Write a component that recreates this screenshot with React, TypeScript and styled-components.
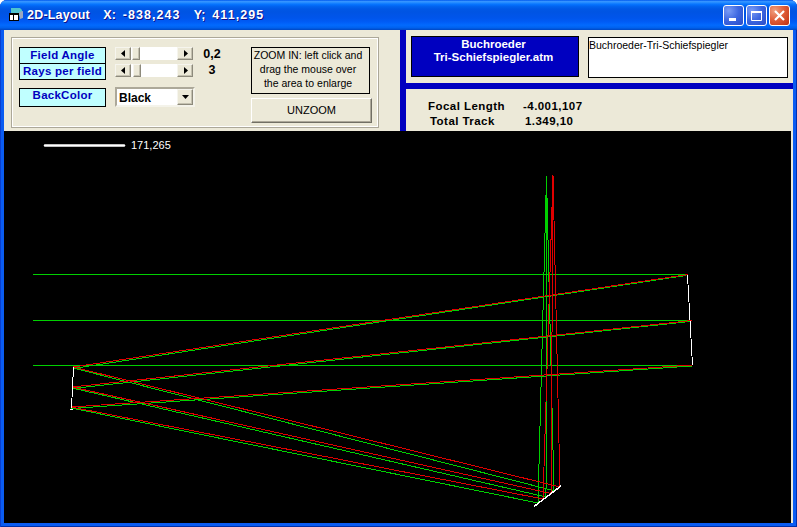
import React from "react";
import styled, { createGlobalStyle } from "styled-components";

const Global = createGlobalStyle`
  html, body { margin: 0; padding: 0; background: #fff; }
  body { font-family: "Liberation Sans", Arial, sans-serif; }
`;

const Win = styled.div`
  width: 797px;
  height: 527px;
  display: flex;
  flex-direction: column;
  background: #0a5cf2;
  box-shadow: inset 1px 0 #0a3fd0, inset -1px 0 #0030b0, inset 0 -1px #0030a8;
  border-radius: 7px 7px 0 0;
  overflow: hidden;
`;

const TitleBar = styled.div`
  height: 30px;
  flex: none;
  display: flex;
  align-items: center;
  padding: 0 7px 0 8px;
  background: linear-gradient(180deg, #0058ee 0%, #3593ff 5%, #288eff 8%, #127dff 12%, #036ffc 16%, #0262ee 22%, #0057e5 30%, #0054e3 40%, #0055eb 60%, #005bf5 72%, #026afe 84%, #0062ef 92%, #0052d6 97%, #0046c0 100%);
`;

const TitleText = styled.span`
  margin-left: 3px;
  color: #fff;
  font: bold 12.5px "Liberation Sans", sans-serif;
  letter-spacing: 0.2px;
  word-spacing: 3px;
  white-space: pre;
  text-shadow: 1px 1px 0 #0f1089;
  flex: 1;
`;

const TitleNumber = styled.span`
  letter-spacing: 1.05px;
`;

const WinBtnRow = styled.div`
  display: flex;
  gap: 2px;
  margin-top: 1px;
`;

const WinBtn = styled.div<{ $close?: boolean }>`
  width: 21px;
  height: 21px;
  box-sizing: border-box;
  border: 1px solid #fff;
  border-radius: 3px;
  display: flex;
  align-items: center;
  justify-content: center;
  background: ${(p) =>
    p.$close
      ? "radial-gradient(circle at 25% 25%, #f0a080 0%, #e0603c 45%, #c03010 100%)"
      : "radial-gradient(circle at 25% 25%, #7a9cf5 0%, #3c66e0 50%, #2a4cc8 100%)"};
`;

const Body = styled.div`
  flex: 1;
  min-height: 0;
  margin: 0 4px 4px;
  background: #ece9d8;
  display: flex;
  flex-direction: column;
`;

const Top = styled.div`
  height: 101px;
  flex: none;
  display: flex;
`;

const LeftPanel = styled.div`
  width: 396px;
  flex: none;
  box-sizing: border-box;
  padding: 7px 0 0 7px;
`;

const Divider = styled.div`
  width: 6px;
  flex: none;
  background: #0000c0;
`;

const RightPanel = styled.div`
  flex: 1;
  display: flex;
  flex-direction: column;
`;

const FilePanel = styled.div`
  height: 53px;
  flex: none;
  display: flex;
  align-items: flex-start;
  padding: 6px 0 0 5px;
  box-sizing: border-box;
`;

const HDivider = styled.div`
  height: 6px;
  flex: none;
  background: #0000c0;
`;

const FileName = styled.div`
  width: 168px;
  height: 41px;
  box-sizing: border-box;
  border: 1px solid #000;
  background: #0000c0;
  color: #fff;
  font: bold 11.5px/13px "Liberation Sans", sans-serif;
  text-align: center;
  padding: 1px 3px 0 0;
`;

const FileDesc = styled.div`
  width: 200px;
  height: 41px;
  margin: 1px 0 0 9px;
  box-sizing: border-box;
  border: 1px solid #000;
  background: #fff;
  color: #000;
  font: 10.5px/13px "Liberation Sans", sans-serif;
  padding: 1px 0;
`;

const Stats = styled.div`
  flex: 1;
  display: grid;
  grid-template-columns: 95px 70px;
  grid-auto-rows: 14.5px;
  align-content: start;
  padding: 10px 0 0 22px;
  font: bold 11.5px/14px "Liberation Sans", sans-serif;
  letter-spacing: 0.45px;
  color: #000;
`;

const StatCell = styled.div<{ $nudge?: number }>`
  padding-left: ${(p) => p.$nudge ?? 0}px;
  white-space: nowrap;
`;

const Group = styled.div`
  width: 368px;
  height: 91px;
  box-sizing: border-box;
  border: 1px solid #aca899;
  box-shadow: inset 0 0 0 1px #fff;
  padding: 9px 0 0 7px;
  display: flex;
`;

const LabelCol = styled.div`
  width: 87px;
  flex: none;
  display: flex;
  flex-direction: column;
`;

const Tag = styled.div<{ $tall?: boolean; $gap?: number }>`
  height: ${(p) => (p.$tall ? 19 : 17)}px;
  margin-top: ${(p) => p.$gap ?? 0}px;
  box-sizing: border-box;
  border: 1px solid #000;
  background: #c0ffff;
  color: #0000c0;
  font: bold 11.5px/${(p) => (p.$tall ? 13 : 14)}px "Liberation Sans", sans-serif;
  letter-spacing: 0.25px;
  text-align: center;
  white-space: nowrap;
`;

const SliderCol = styled.div`
  width: 80px;
  margin-left: 9px;
  flex: none;
  display: flex;
  flex-direction: column;
`;

const Scroll = styled.div<{ $gap?: number }>`
  width: 78px;
  height: 13px;
  margin-top: ${(p) => p.$gap ?? 0}px;
  display: flex;
  background: #fff;
`;

const raised = `
  background: #ece9d8;
  box-sizing: border-box;
  border: 1px solid;
  border-color: #f6f5ee #8d8a7c #8d8a7c #f6f5ee;
  box-shadow: inset -1px -1px 0 #c4c1b0;
`;

const ArrowBtn = styled.div`
  ${raised}
  width: 16px;
  height: 13px;
  flex: none;
  display: flex;
  align-items: center;
  justify-content: center;
`;

const Track = styled.div`
  flex: 1;
  display: flex;
`;

const Thumb = styled.div<{ $at: number }>`
  ${raised}
  width: 8px;
  height: 13px;
  margin-left: ${(p) => p.$at}px;
`;

const Combo = styled.div`
  width: 80px;
  height: 20px;
  margin-top: 10px;
  box-sizing: border-box;
  border: 2px solid;
  border-color: #aca899 #f4f3ea #f4f3ea #aca899;
  background: #fff;
  display: flex;
  justify-content: space-between;
  color: #000;
  font: bold 12px/19px "Liberation Sans", sans-serif;
  padding-left: 2px;
`;

const ComboBtn = styled(ArrowBtn)`
  width: 16px;
  height: 16px;
`;

const ValueCol = styled.div`
  width: 36px;
  margin-left: -1px;
  flex: none;
  display: flex;
  flex-direction: column;
`;

const Value = styled.div`
  height: 15px;
  margin-bottom: 1px;
  font: bold 12.5px/14px "Liberation Sans", sans-serif;
  color: #000;
  text-align: center;
`;

const ZoomCol = styled.div`
  width: 121px;
  margin-left: 21px;
  flex: none;
`;

const ZoomNote = styled.div`
  width: 119px;
  height: 47px;
  box-sizing: border-box;
  border: 1px solid #000;
  font: 10.5px/14px "Liberation Sans", sans-serif;
  color: #000;
  text-align: center;
  padding: 0 5px 0 0;
  white-space: nowrap;
`;

const UnzoomBtn = styled.div`
  width: 121px;
  height: 25px;
  margin-top: 4px;
  box-sizing: border-box;
  background: #ece9d8;
  border: 1px solid;
  border-color: #fff #716f64 #716f64 #fff;
  box-shadow: inset -1px -1px 0 #aca899;
  font: 11px/23px "Liberation Sans", sans-serif;
  color: #000;
  text-align: center;
`;

const CanvasWrap = styled.div`
  flex: 1;
  min-height: 0;
  margin-right: 2px;
  background: #000;
`;

const Plot = styled.svg`
  display: block;
  width: 100%;
  height: 100%;
`;

const Left = () => (
  <svg width="5" height="7" viewBox="0 0 5 7"><path d="M4 0v7L0 3.5z" fill="#000" /></svg>
);
const Right = () => (
  <svg width="5" height="7" viewBox="0 0 5 7"><path d="M1 0v7l4-3.5z" fill="#000" /></svg>
);
const Down = () => (
  <svg width="7" height="4" viewBox="0 0 7 4"><path d="M0 0h7L3.5 4z" fill="#000" /></svg>
);

const Slider = ({ at, gap }: { at: number; gap?: number }) => (
  <Scroll $gap={gap}>
    <ArrowBtn><Left /></ArrowBtn>
    <Track><Thumb $at={at} /></Track>
    <ArrowBtn><Right /></ArrowBtn>
  </Scroll>
);

const AppIcon = () => (
  <svg width="16" height="16" viewBox="0 0 16 16">
    <path d="M3 1h9l2 2v6H6V6H3z" fill="#4fc4cf" />
    <path d="M11 5l4-1v7l-3 1z" fill="#9aa8c0" />
    <rect x="1.5" y="6.5" width="9" height="7" fill="#fff" stroke="#000" />
    <rect x="1" y="6" width="10" height="2" fill="#000" />
    <path d="M5.5 8v6" stroke="#000" />
  </svg>
);

const greenRays = [
  "M33 274.5H685", "M33 320.5H689", "M33 365.5H691",
  "M686 275.5L73 368.5", "M690 321.5L72 388.5", "M692 366L71 408.5",
  "M73 368L555 491", "M72 388L546 497", "M71 408L538 503",
  "M538 503L546.5 176", "M546 497L546.5 176", "M554 491L546.5 176",
];
const redRays = [
  "M688 274.5L73 367", "M692 320.5L72 387", "M692 365L71 407",
  "M73 367L560 487", "M72 387L551 493.5", "M71 407L543 499",
  "M543 499L553 175", "M551 493.5L553 175", "M560 487L553 175",
];

export default function App() {
  return (
    <>
      <Global />
      <Win>
        <TitleBar>
          <AppIcon />
          <TitleText>
            {"2D-Layout  X: "}
            <TitleNumber>-838,243</TitleNumber>
            {"  Y; "}
            <TitleNumber>411,295</TitleNumber>
          </TitleText>
          <WinBtnRow>
            <WinBtn>
              <svg width="13" height="13" viewBox="0 0 13 13"><rect x="2" y="9" width="7" height="3" fill="#fff" /></svg>
            </WinBtn>
            <WinBtn>
              <svg width="13" height="13" viewBox="0 0 13 13"><path d="M1.5 2.5h10v9h-10z" fill="none" stroke="#fff" /><rect x="1" y="2" width="11" height="2" fill="#fff" /></svg>
            </WinBtn>
            <WinBtn $close>
              <svg width="13" height="13" viewBox="0 0 13 13"><path d="M2 2l9 9M11 2l-9 9" stroke="#fff" strokeWidth="2.2" /></svg>
            </WinBtn>
          </WinBtnRow>
        </TitleBar>
        <Body>
          <Top>
            <LeftPanel>
              <Group>
                <LabelCol>
                  <Tag>Field Angle</Tag>
                  <Tag $gap={-1}>Rays per field</Tag>
                  <Tag $tall $gap={8}>BackColor</Tag>
                </LabelCol>
                <SliderCol>
                  <Slider at={1} />
                  <Slider at={2} gap={4} />
                  <Combo>
                    Black
                    <ComboBtn><Down /></ComboBtn>
                  </Combo>
                </SliderCol>
                <ValueCol>
                  <Value>0,2</Value>
                  <Value>3</Value>
                </ValueCol>
                <ZoomCol>
                  <ZoomNote>
                    ZOOM IN: left click and<br />
                    drag the mouse over<br />
                    the area to enlarge
                  </ZoomNote>
                  <UnzoomBtn>UNZOOM</UnzoomBtn>
                </ZoomCol>
              </Group>
            </LeftPanel>
            <Divider />
            <RightPanel>
              <FilePanel>
                <FileName>Buchroeder<br />Tri-Schiefspiegler.atm</FileName>
                <FileDesc>Buchroeder-Tri-Schiefspiegler</FileDesc>
              </FilePanel>
              <HDivider />
              <Stats>
                <StatCell>Focal Length</StatCell>
                <StatCell $nudge={0}>-4.001,107</StatCell>
                <StatCell $nudge={2}>Total Track</StatCell>
                <StatCell $nudge={2}>1.349,10</StatCell>
              </Stats>
            </RightPanel>
          </Top>
          <CanvasWrap>
            <Plot viewBox="4 131 787 392">
              <line x1="45" y1="145.5" x2="124" y2="145.5" stroke="#fff" strokeWidth="2.5" strokeLinecap="round" />
              <text x="131" y="149" fill="#fff" fontFamily="Liberation Sans, sans-serif" fontSize="11">171,265</text>
              <g fill="none" shapeRendering="crispEdges" strokeWidth="1">
                <g stroke="#00d000">{greenRays.map((d) => <path key={d} d={d} />)}</g>
                <g stroke="#e00000">{redRays.map((d) => <path key={d} d={d} />)}</g>
                <g stroke="#fff">
                  <path d="M687.5 275L692.5 365" />
                  <path d="M73.5 367L71.5 408" />
                  <path d="M70 409.5H73" />
                  <path d="M534 506.5L561 486" strokeWidth="1.5" />
                </g>
              </g>
            </Plot>
          </CanvasWrap>
        </Body>
      </Win>
    </>
  );
}
